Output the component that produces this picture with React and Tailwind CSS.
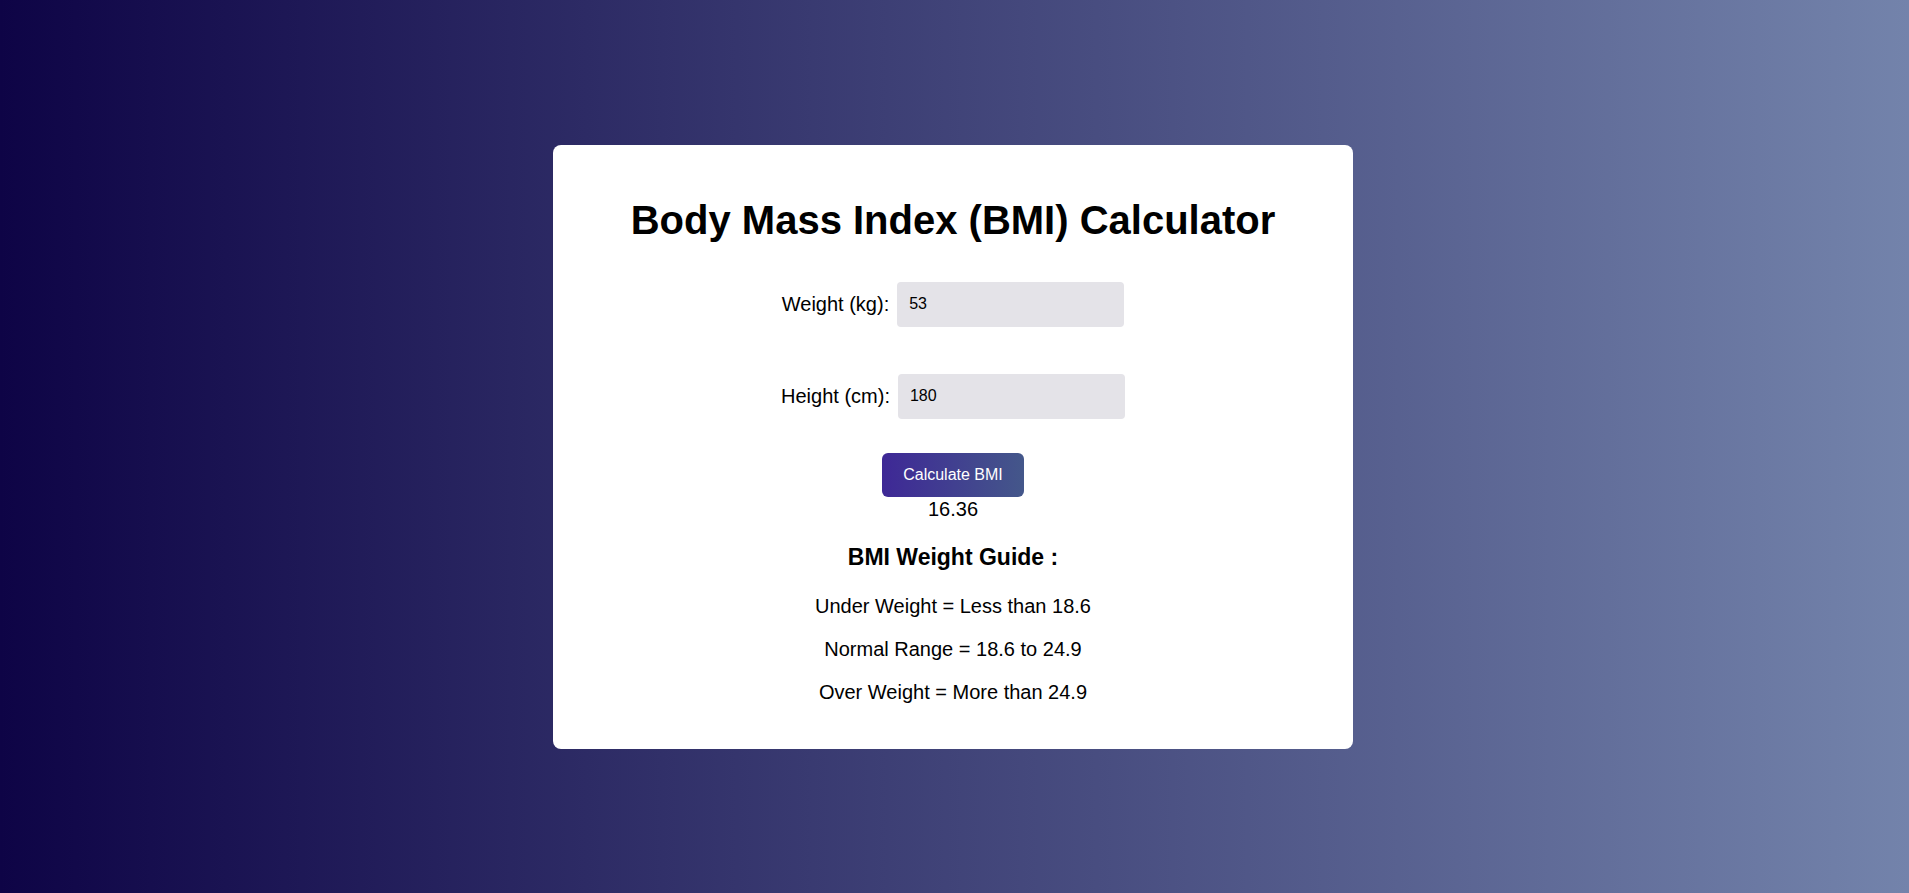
import React, { useState } from "react";

export default function App() {
  const [weight, setWeight] = useState("53");
  const [height, setHeight] = useState("180");
  const [bmi, setBmi] = useState("16.36");

  const calc = () => {
    const w = parseFloat(weight);
    const h = parseFloat(height) / 100;
    if (w > 0 && h > 0) setBmi((w / (h * h)).toFixed(2));
  };

  return (
    <div
      className="w-full h-[893px] flex items-center justify-center pr-[3px] bg-linear-to-r/srgb from-[#0e0446] to-[#7383ab] text-black"
      style={{ fontFamily: '"Liberation Sans", Arial, sans-serif' }}
    >
      <div className="w-[800px] bg-white rounded-lg pt-[52px] pb-[45px] flex flex-col items-center text-center">
        <h1 className="text-[40px] leading-[46px] font-bold">Body Mass Index (BMI) Calculator</h1>

        <div className="mt-[39px] flex items-center justify-center gap-2">
          <label className="text-[20px] leading-[23px]">Weight (kg):</label>
          <input
            value={weight}
            onChange={(e) => setWeight(e.target.value)}
            className="w-[227px] h-[45px] rounded bg-[#e4e3e8] pl-3 text-[16px] outline-none"
          />
        </div>

        <div className="mt-[47px] flex items-center justify-center gap-2">
          <label className="text-[20px] leading-[23px]">Height (cm):</label>
          <input
            value={height}
            onChange={(e) => setHeight(e.target.value)}
            className="w-[227px] h-[45px] rounded bg-[#e4e3e8] pl-3 text-[16px] outline-none"
          />
        </div>

        <button
          onClick={calc}
          className="mt-[34px] w-[142px] h-[44px] rounded-md bg-linear-to-r/srgb from-[#3e2896] to-[#44578a] text-white text-[16px]"
        >
          Calculate BMI
        </button>
        <div className="mt-[1px] text-[20px] leading-[23px]">{bmi}</div>

        <h3 className="mt-[23px] text-[23px] leading-[26px] font-bold">BMI Weight Guide :</h3>

        <div className="mt-[25px] flex flex-col items-center gap-[20px] text-[20px] leading-[23px]">
          <p>Under Weight = Less than 18.6</p>
          <p>Normal Range = 18.6 to 24.9</p>
          <p>Over Weight = More than 24.9</p>
        </div>
      </div>
    </div>
  );
}
